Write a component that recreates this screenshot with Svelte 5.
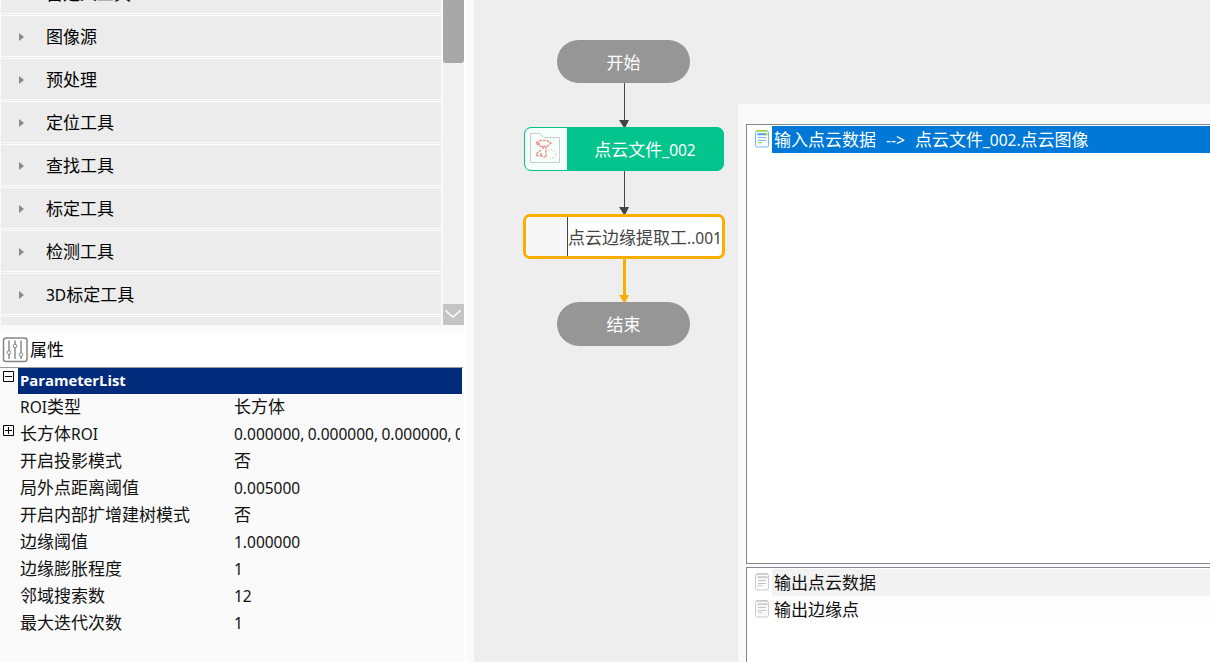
<script>
  const tools = ['图像源', '预处理', '定位工具', '查找工具', '标定工具', '检测工具', '3D标定工具'];
  const params = [
    ['ROI类型', '长方体'],
    ['长方体ROI', '0.000000, 0.000000, 0.000000, 0.000000', true],
    ['开启投影模式', '否'],
    ['局外点距离阈值', '0.005000'],
    ['开启内部扩增建树模式', '否'],
    ['边缘阈值', '1.000000'],
    ['边缘膨胀程度', '1'],
    ['邻域搜索数', '12'],
    ['最大迭代次数', '1']
  ];
  const outputs = ['输出点云数据', '输出边缘点'];
  // Latin runs are set a little smaller than the Chinese text around them.
  const runs = (s) => s.match(/[\x00-\x7f]+|[^\x00-\x7f]+/g) ?? [];
</script>

{#snippet mixed(s)}{#each runs(s) as r}{#if r.charCodeAt(0) < 128}<span class="latin">{r}</span>{:else}{r}{/if}{/each}{/snippet}

{#snippet doc(active)}
  <svg class="doc" width="14" height="18" viewBox="0 0 14 18" fill="none">
    <rect x=".5" y="1" width="13" height="16" rx="1.5" fill={active ? '#f4faff' : '#fafafa'} stroke={active ? '#7db7ee' : '#cccccc'} />
    <path d="M1.5 .8H12.5" stroke={active ? '#a4d927' : '#c8c8c8'} stroke-width="1.5" />
    <path d="M2.5 4.2H11.5" stroke={active ? '#5b9fe0' : '#cfcfcf'} stroke-width="2" />
    <path d="M10.5 4.2H12.5" stroke={active ? '#a4d927' : '#cfcfcf'} stroke-width="2" />
    <path d="M3 7.5H11M3 10.5H11" stroke={active ? '#83b8ea' : '#c4c4c4'} />
    <path d="M3 12.7H7" stroke={active ? '#94d01c' : '#c4c4c4'} />
  </svg>
{/snippet}

<div class="app">
  <aside>
    <div class="toolbox">
      <div class="tree">
        <div class="tool first"><div class="caption">自定义工具</div></div>
        {#each tools as t}
          <div class="tool">
            <svg class="arrow" width="6" height="8" viewBox="0 0 6 8"><path d="M0 0L5 4L0 8Z" fill="#8a8a8a" /></svg>
            <div class="caption">{@render mixed(t)}</div>
          </div>
        {/each}
        <div class="tool"></div>
      </div>
      <div class="scroll">
        <div class="thumb"></div>
        <div class="down">
          <svg width="21" height="21" viewBox="0 0 21 21"><path d="M2.5 6.5L10 13L17.5 6.5" fill="none" stroke="#fff" stroke-width="1.5" /></svg>
        </div>
      </div>
    </div>
    <div class="title">
      <svg width="26" height="26" viewBox="0 0 26 26" fill="#fff" stroke="#858585">
        <rect x="1.500" y="1" width="23.5" height="23.5" rx="2.5" stroke-width="1.5" />
        <path d="M7 3.500V22M13 3.500V22M19 3.500V22" stroke-width="1.4" />
        <circle cx="7" cy="15.5" r="1.8" /><circle cx="13" cy="9" r="1.8" /><circle cx="19" cy="17.5" r="1.8" />
      </svg>
      <div class="heading">属性</div>
    </div>
    <div class="grid">
      <div class="param head">
        <div class="gutter"><svg width="11" height="11"><path d="M.5 .5H10.5V10.5H.5ZM2 5.5H9" fill="none" stroke="#000" /></svg></div>
        <b>ParameterList</b>
      </div>
      {#each params as [name, value, expandable]}
        <div class="param">
          <div class="gutter">
            {#if expandable}<svg width="11" height="11"><path d="M.5 .5H10.5V10.5H.5ZM2 5.5H9M5.5 2V9" fill="none" stroke="#000" /></svg>{/if}
          </div>
          <div class="name">{@render mixed(name)}</div>
          <div class="value">{@render mixed(value)}</div>
        </div>
      {/each}
    </div>
  </aside>
  <div class="splitter"></div>
  <main>
    <svg class="links" width="264" height="662">
      <path d="M150.5 83V121M150.5 171V208" stroke="#444" />
      <path d="M145 120H155L151.500 127H149.500ZM145 207H155L151.500 214H149.500Z" fill="#444" />
      <path d="M150.500 258V297" stroke="#faae00" stroke-width="3" />
      <path d="M145 295H155L151.500 302H149.500Z" fill="#faae00" />
    </svg>
    <div class="pill start">开始</div>
    <div class="node file">
      <div class="thumbnail">
        <svg width="32" height="32" viewBox="0 0 32 32" fill="none">
          <path d="M1.500 1.500H11L15 5.500H30.500V30.500H1.500Z" stroke="#c8cccb" />
          <g stroke="#f0958f" stroke-width="1.500" stroke-dasharray="3 .8">
            <path d="M7 11L11 8.500H18L22 11L18 14.500H11Z" />
            <path d="M9 10.500L11 13M17 14.500V26M14 14V18" />
            <path d="M7 22L12 18M7 23.500H11L16 25.500M12 21V25" />
          </g>
          <path d="M19 18.500L22 17.500L26 19.500L27 23L25 26L21 26.500" stroke="#f6c4bf" stroke-dasharray="2 1" />
        </svg>
      </div>
      <div class="label">{@render mixed('点云文件_002')}</div>
    </div>
    <div class="node edge">
      <div class="thumbnail"></div>
      <div class="label">{@render mixed('点云边缘提取工..001')}</div>
    </div>
    <div class="pill end">结束</div>
  </main>
  <section>
    <div class="list inputs">
      <div class="item selected">{@render doc(true)}<div class="text">{@render mixed('输入点云数据  -->  点云文件_002.点云图像')}</div></div>
    </div>
    <div class="list outputs">
      {#each outputs as o}
        <div class="item">{@render doc(false)}<div class="text">{@render mixed(o)}</div></div>
      {/each}
    </div>
  </section>
</div>

<style>
  .app {
    display: flex;
    width: 1210px;
    height: 662px;
    overflow: hidden;
    background: #eee;
    color: #111;
    font: 17px/25px 'Noto Sans CJK SC', sans-serif;
  }
  svg { display: block; flex: none; }
  .latin { font-family: 'Noto Sans', sans-serif; font-size: 15.5px; line-height: 1; }
  aside { width: 464px; display: flex; flex-direction: column; background: #fafafa; flex: none; }
  .toolbox { height: 325px; display: flex; overflow: hidden; flex: none; }
  .tree { width: 440px; margin-left: 1px; background: #ececec; border-right: 2px solid #fafafa; height: 325px; overflow: hidden; }
  .tool {
    box-sizing: border-box;
    height: 42px;
    margin-bottom: 1px;
    border: solid #fbfbfb;
    border-width: 1px 0;
    display: flex;
    align-items: center;
    padding-left: 18px;
    color: #000;
  }
  .arrow { margin-top: 2px; }
  .caption { margin-left: 21px; padding-bottom: 2px; }
  .tool.first { margin-top: -28px; }
  .tool.first .caption { margin-left: 27px; }
  .scroll { width: 21px; background: #f0f0f0; display: flex; flex-direction: column; justify-content: space-between; }
  .thumb { height: 63px; background: #a8a8a8; border-radius: 0 0 3px 3px; }
  .down { height: 21px; background: #c6c5c6; }
  .title { margin-top: 8px; height: 34px; background: #fff; display: flex; align-items: center; padding-left: 2px; color: #000; flex: none; }
  .heading { margin-left: 2px; line-height: 23px; padding-bottom: 4px; }
  .grid { width: 463px; border-top: 1px solid #999; }
  .param { display: flex; height: 27px; line-height: 23px; }
  .param.head { height: 26px; }
  .gutter { width: 18px; flex: none; padding: 4px 0 0 3px; box-sizing: border-box; }
  .head .gutter { padding-top: 3px; }
  b { width: 444px; box-sizing: border-box; background: #002b7a; color: #fff; padding-left: 2px; font: bold 14.8px/25px 'Open Sans', sans-serif; }
  .name { width: 214px; padding-left: 2px; }
  .value { width: 226px; overflow: hidden; white-space: nowrap; word-spacing: -.7px; }
  .splitter { width: 7px; border-left: 3px solid #fff; background: #fafafa; flex: none; }
  main { position: relative; width: 264px; flex: none; }
  .links { position: absolute; left: 0; top: 0; }
  .pill {
    position: absolute;
    left: 83px;
    width: 133px;
    height: 43px;
    border-radius: 22px;
    background: #969696;
    color: #fff;
    text-align: center;
    line-height: 44px;
  }
  .start { top: 40px; }
  .end { top: 302px; height: 44px; line-height: 43px; }
  .node { position: absolute; box-sizing: border-box; display: flex; overflow: hidden; }
  .label { flex: 1; text-align: center; white-space: nowrap; }
  .file { left: 50px; top: 127px; width: 200px; height: 44px; border: 1px solid #04c48d; border-radius: 7px; background: #04c48d; color: #fff; line-height: 41px; }
  .file .thumbnail { width: 42px; background: #f7fffd; padding: 4px 0 0 4px; box-sizing: border-box; border-radius: 5px 0 0 5px; }
  .edge { left: 49px; top: 214px; width: 202px; height: 45px; border: 3px solid #faae00; border-radius: 7px; background: #fff; color: #444; line-height: 39px; }
  .edge .thumbnail { width: 41px; background: #f7f7f7; border-right: 1px solid #444; flex: none; }
  section { margin-top: 104px; width: 472px; height: 558px; box-sizing: border-box; padding: 20px 0 0 8px; background: #fafafa; flex: none; }
  .list { box-sizing: border-box; border: 1px solid #828790; border-right: 0; background: #fff; padding-top: 1px; }
  .inputs { height: 440px; margin-bottom: 3px; }
  .outputs { height: 110px; }
  .item { display: flex; height: 27px; padding-left: 8px; }
  .doc { margin-top: 4px; margin-right: 3px; }
  .text { flex: 1; padding-left: 2px; background: #fdfdfd; line-height: 26px; white-space: pre; word-spacing: 1px; }
  .item:first-child .text { background: #f2f2f2; }
  .selected:first-child .text { background: #0078d7; color: #fff; }
</style>
